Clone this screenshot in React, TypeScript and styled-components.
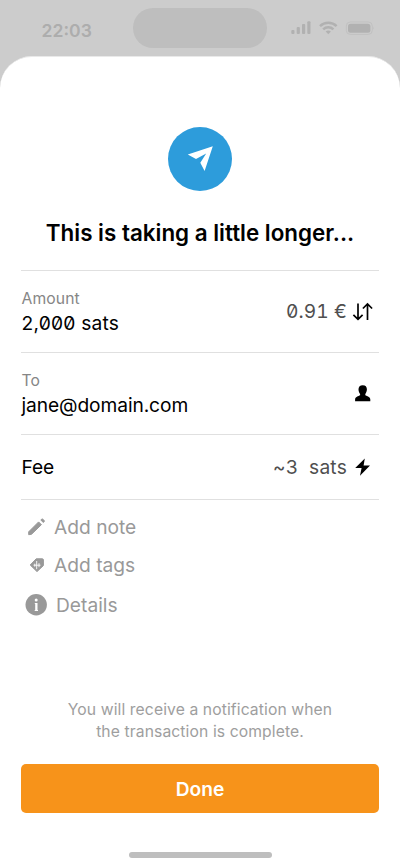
import React from "react";
import styled, { createGlobalStyle } from "styled-components";

const GlobalStyle = createGlobalStyle`
  *, *::before, *::after { box-sizing: border-box; }
  body { margin: 0; background: #ccc; }
`;

const Screen = styled.div`
  display: flex;
  flex-direction: column;
  width: 400px;
  height: 866px;
  overflow: hidden;
  background: #ccc;
  color: #000;
  font-family: Inter, "Liberation Sans", sans-serif;
  font-feature-settings: "zero" 1;
`;

const StatusBar = styled.header`
  display: grid;
  grid-template-columns: 133px 134px 133px;
  height: 56px;
  padding-top: 8px;
`;

const Clock = styled.time`
  padding: 11px 0 0 41.5px;
  color: #adadad;
  font-size: 17.6px;
  font-weight: 600;
  line-height: 23px;
  font-feature-settings: "zero" 0, "case" 1;
`;

const Island = styled.div`
  height: 40px;
  border-radius: 20px;
  background: #bebebe;
`;

const StatusIcons = styled.div`
  display: flex;
  align-items: flex-start;
  padding: 12px 0 0 24px;
  color: #b1b1b1;
`;

const Sheet = styled.main`
  display: flex;
  flex-direction: column;
  flex: 1;
  padding: 70px 21px 0;
  border-top: 1px solid #e9e9e9;
  border-radius: 32px 32px 0 0;
  background: #fff;
`;

const Badge = styled.div`
  align-self: center;
  width: 64px;
  height: 64px;
  border-radius: 50%;
  background: #2d9cdb;
`;

const Title = styled.h1`
  margin: 28px -10px 22px;
  text-align: center;
  white-space: nowrap;
  font-size: 22.4px;
  font-weight: 600;
  line-height: 28px;
  padding-bottom: 1px;
`;

const Row = styled.section<{ $height: number }>`
  display: flex;
  justify-content: space-between;
  align-items: center;
  height: ${(p) => p.$height}px;
  padding: 0 5px 0 0.5px;
  border-top: 1px solid #e0e0e0;
`;

const Field = styled.div`
  display: flex;
  flex-direction: column;
`;

const Label = styled.span`
  color: #868686;
  font-size: 15.7px;
  line-height: 24px;
  letter-spacing: 0.1px;
`;

const Value = styled.span<{ $tracking?: number }>`
  font-size: 19.2px;
  line-height: 25px;
  letter-spacing: ${(p) => p.$tracking ?? -0.1}px;
`;

const Trailing = styled.div`
  display: flex;
  align-items: center;
  gap: 5px;
`;

const Amount = styled.span<{ $tracking: number }>`
  color: #4f4f4f;
  font-size: 19.2px;
  line-height: 25px;
  letter-spacing: ${(p) => p.$tracking}px;
  font-feature-settings: "zero" 1, "tnum" 1;
  white-space: pre;
`;

const Actions = styled.div`
  display: flex;
  flex-direction: column;
  padding-top: 9px;
  border-top: 1px solid #e0e0e0;
`;

const Action = styled.button<{ $height: number; $gap: number }>`
  display: flex;
  align-items: center;
  gap: ${(p) => p.$gap}px;
  height: ${(p) => p.$height}px;
  padding: 0 0 0 4px;
  border: 0;
  background: none;
  color: #999;
  font: inherit;
  font-size: 19.2px;
`;

const Notice = styled.p`
  margin: auto 0 20.5px;
  color: #9e9e9e;
  text-align: center;
  font-size: 15.7px;
  line-height: 22.5px;
  letter-spacing: 0.1px;
`;

const DoneButton = styled.button`
  flex: none;
  height: 49px;
  border: 0;
  border-radius: 5px;
  background: #f7931a;
  color: #fff;
  font: inherit;
  font-size: 19.2px;
  font-weight: 600;
`;

const HomeIndicator = styled.div`
  align-self: center;
  flex: none;
  width: 143px;
  height: 6px;
  margin: 39px 0 8px;
  border-radius: 3px;
  background: #bebebe;
`;

const StatusGlyphs = () => (
  <svg width="84" height="16" viewBox="0 0 84 16" fill="currentColor">
    <rect x="0.3" y="10" width="3.2" height="4" rx="1" />
    <rect x="5.7" y="7" width="3.2" height="7" rx="1" />
    <rect x="11" y="4" width="3.2" height="10" rx="1" />
    <rect x="16.3" y="1.3" width="3.2" height="12.7" rx="1" />
    <g fill="none" stroke="currentColor" strokeWidth="2.5">
      <path d="M29 6.1a12 12 0 0 1 16.6 0" />
      <path d="M32.2 9.4a7.3 7.3 0 0 1 10.2 0" />
    </g>
    <path d="M34.7 11.6a3.8 3.8 0 0 1 5.2 0L37.3 14.3z" />
    <rect x="55.3" y="2" width="26" height="12.4" rx="4" fill="none" stroke="#c1c1c1" />
    <rect x="57" y="3.7" width="22.4" height="9" rx="2.5" />
    <path d="M82.3 6.4q1.6 1.6 0 3.4z" fill="#c1c1c1" />
  </svg>
);

const PlaneIcon = () => (
  <svg width="64" height="64" viewBox="0 0 64 64" fill="#fff">
    <path d="M44.8 19.2 19.8 27.5 28 32 38.2 26.5 32.3 35.7 36.6 44z" />
  </svg>
);

const SwapIcon = () => (
  <svg width="22" height="20" viewBox="0 0 22 20" fill="none" stroke="#000" strokeWidth="1.7">
    <path d="M6 1.5v16M1.4 12.8 6 17.4l4.6-4.6M15.5 18V2M10.9 6.5l4.6-4.6 4.6 4.6" />
  </svg>
);

const PersonIcon = () => (
  <svg width="22" height="20" viewBox="0 0 22 20">
    <path d="M10.7 1.2c2.9 0 4.2 1.6 4.2 4.1 0 1.8-.6 3.5-1.6 4.6v1.3c1.7 1 5 1.5 5 4.2v1.8H3.1v-1.8c0-2.7 3.3-3.2 5-4.2v-1.3c-1-1.1-1.6-2.8-1.6-4.6 0-2.5 1.5-4.1 4.2-4.1z" />
  </svg>
);

const BoltIcon = () => (
  <svg width="22" height="20" viewBox="0 0 22 20">
    <path d="M12.8 1.4 3.2 11h6.4L8 18.7 18 8.4h-6.4z" />
  </svg>
);

const PencilIcon = () => (
  <svg width="22" height="22" viewBox="0 0 22 22" fill="currentColor" stroke="currentColor" strokeWidth="1" strokeLinejoin="round">
    <path d="M3.7 15.8 13.6 5.9l2.8 2.8-9.9 9.6-2.8.4zM15.8 4l.8-.8q.7-.6 1.3 0l1.2 1.2q.6.7 0 1.3l-.8.8z" />
  </svg>
);

const TagIcon = () => (
  <svg width="22" height="22" viewBox="0 0 22 22">
    <path d="m11.2 4.8h6q1.2 0 1.2 1.2v5.6L12 17.6 5.2 11z" fill="currentColor" stroke="currentColor" strokeWidth="1" strokeLinejoin="round" />
    <path d="M11.7 7v8.2M14 9.2v4M8.5 11.2h7M9.8 9.7v3" fill="none" stroke="#fff" strokeWidth=".9" />
  </svg>
);

const InfoIcon = () => (
  <svg width="22" height="22" viewBox="0 0 22 22">
    <circle cx="11.2" cy="10.8" r="10.7" fill="currentColor" />
    <circle cx="11.2" cy="6" r="1.5" fill="#fff" />
    <path d="M9.8 8.9h2.7v7.1h.5v1.1H9.7V16h.5v-6h-.4z" fill="#fff" />
  </svg>
);

export default function App() {
  return (
    <Screen>
      <GlobalStyle />
      <StatusBar>
        <Clock>22:03</Clock>
        <Island />
        <StatusIcons><StatusGlyphs /></StatusIcons>
      </StatusBar>
      <Sheet>
        <Badge><PlaneIcon /></Badge>
        <Title>This is taking a little longer...</Title>
        <Row $height={82}>
          <Field><Label>Amount</Label><Value $tracking={0.2}>2,000 sats</Value></Field>
          <Trailing><Amount $tracking={0.1}>0.91 €</Amount><SwapIcon /></Trailing>
        </Row>
        <Row $height={82}>
          <Field><Label>To</Label><Value>jane@domain.com</Value></Field>
          <Trailing><PersonIcon /></Trailing>
        </Row>
        <Row $height={65}>
          <Value>Fee</Value>
          <Trailing><Amount $tracking={0.2}>~3  sats</Amount><BoltIcon /></Trailing>
        </Row>
        <Actions>
          <Action $height={36} $gap={7}><PencilIcon />Add note</Action>
          <Action $height={39} $gap={7}><TagIcon />Add tags</Action>
          <Action $height={42} $gap={9}><InfoIcon />Details</Action>
        </Actions>
        <Notice>You will receive a notification when<br />the transaction is complete.</Notice>
        <DoneButton>Done</DoneButton>
        <HomeIndicator />
      </Sheet>
    </Screen>
  );
}
